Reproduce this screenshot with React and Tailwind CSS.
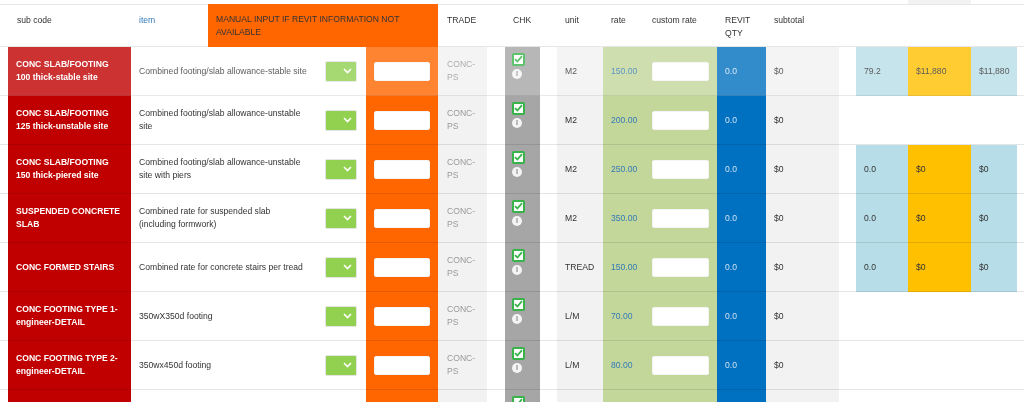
import React from "react";

const rows = [
  { a: "CONC SLAB/FOOTING", b: "100 thick-stable site", item: "Combined footing/slab allowance-stable site", unit: "M2", rate: "150.00", extra: ["79.2", "$11,880", "$11,880"], hover: true },
  { a: "CONC SLAB/FOOTING", b: "125 thick-unstable site", item: "Combined footing/slab allowance-unstable site", unit: "M2", rate: "200.00" },
  { a: "CONC SLAB/FOOTING", b: "150 thick-piered site", item: "Combined footing/slab allowance-unstable site with piers", unit: "M2", rate: "250.00", extra: ["0.0", "$0", "$0"] },
  { a: "SUSPENDED CONCRETE", b: "SLAB", item: "Combined rate for suspended slab (including formwork)", unit: "M2", rate: "350.00", extra: ["0.0", "$0", "$0"] },
  { a: "CONC FORMED STAIRS", item: "Combined rate for concrete stairs per tread", unit: "TREAD", rate: "150.00", extra: ["0.0", "$0", "$0"] },
  { a: "CONC FOOTING TYPE 1-", b: "engineer-DETAIL", item: "350wX350d footing", unit: "L/M", rate: "70.00" },
  { a: "CONC FOOTING TYPE 2-", b: "engineer-DETAIL", item: "350wx450d footing", unit: "L/M", rate: "80.00" },
];

const cell = "h-[49px] shrink-0 border-b border-black/10 flex items-center";

function Check() {
  return (
    <div className="flex flex-col items-start gap-[2px] -mt-[11px]">
      <div className="w-[13px] h-[13px] rounded-[2px] border-2 border-[#37b34a] bg-white flex items-center justify-center">
        <svg width="9" height="8" viewBox="0 0 9 8">
          <path d="M1 4.2 L3.4 6.5 L8 1.2" fill="none" stroke="#37b34a" strokeWidth="1.8" />
        </svg>
      </div>
      <div className="w-[10px] h-[10px] rounded-full bg-[#f4f4f4] flex items-center justify-center mt-[1px]">
        <div className="w-[1.5px] h-[5px] bg-[#bbb]" />
      </div>
    </div>
  );
}

function Select() {
  return (
    <div className="w-[32px] h-[21px] rounded-[2px] bg-[#92d050] border border-[#e4e4e4] flex items-center justify-end pr-[4px]">
      <svg width="9" height="6" viewBox="0 0 9 6">
        <path d="M1 1 L4.5 4.5 L8 1" fill="none" stroke="#fff" strokeWidth="1.6" />
      </svg>
    </div>
  );
}

function Input() {
  return <div className="w-[57px] h-[19px] rounded-[2px] bg-white border border-[#f4f4f4]" />;
}

function Row({ r, blank }) {
  return (
    <div className={`flex ${r.hover ? "opacity-80" : ""}`}>
      <div className={`${cell} w-[8px] bg-white`} />
      <div className={`${cell} w-[123px] bg-[#c00000] px-2 text-white font-bold`}>
        <div>{r.a}{r.b && <><br />{r.b}</>}</div>
      </div>
      <div className={`${cell} w-[235px] bg-white pl-2 text-[#333] justify-between pr-[9px]`}>
        <div className="w-[170px]">{r.item}</div>
        {!blank && <Select />}
      </div>
      <div className={`${cell} w-[72px] bg-[#ff6600] px-2`}>{!blank && <Input />}</div>
      <div className={`${cell} w-[49px] bg-[#f2f2f2] px-[9px] text-[#999]`}>
        {!blank && <div>CONC-<br />PS</div>}
      </div>
      <div className={`${cell} w-[18px] bg-white`} />
      <div className={`${cell} w-[35px] bg-[#a6a6a6] px-[7px]`}><Check /></div>
      <div className={`${cell} w-[17px] bg-white`} />
      <div className={`${cell} w-[46px] bg-[#f2f2f2] px-2 text-[#333]`}>{r.unit}</div>
      <div className={`${cell} w-[41px] bg-[#c4d79b] px-2 text-[#337ab7]`}>{r.rate}</div>
      <div className={`${cell} w-[73px] bg-[#c4d79b] pl-2`}>{!blank && <Input />}</div>
      <div className={`${cell} w-[49px] bg-[#0070c0] px-2 text-[#cfe3f5]`}>{!blank && "0.0"}</div>
      <div className={`${cell} w-[73px] bg-[#f2f2f2] px-2 text-[#333]`}>{!blank && "$0"}</div>
      {r.extra ? (
        <>
          <div className={`${cell} w-[17px] bg-white`} />
          <div className={`${cell} w-[52px] bg-[#b7dee8] px-2 text-[#333]`}>{r.extra[0]}</div>
          <div className={`${cell} w-[63px] bg-[#ffc000] px-2 text-[#333]`}>{r.extra[1]}</div>
          <div className={`${cell} w-[46px] bg-[#b7dee8] px-2 text-[#333]`}>{r.extra[2]}</div>
          <div className={`${cell} flex-1 bg-white`} />
        </>
      ) : (
        <div className={`${cell} flex-1 bg-white`} />
      )}
    </div>
  );
}

function Head({ w, children, className = "" }) {
  return <div className={`${w} shrink-0 px-2 pt-[9px] ${className}`}>{children}</div>;
}

export default function App() {
  return (
    <div
      className="h-[402px] w-[1024px] overflow-hidden bg-white text-[8.6px] leading-[13px] text-[#333] blur-[0.5px]"
      style={{ fontFamily: '"Liberation Sans", Arial, sans-serif' }}
    >
      <div className="h-[4px] flex">
        <div className="w-[908px]" />
        <div className="w-[63px] bg-[#f2f2f2]" />
      </div>
      <div className="flex h-[43px] border-y border-[#e6e6e6]">
        <Head w="w-[131px]" className="pl-[17px]">sub code</Head>
        <Head w="w-[77px]" className="text-[#337ab7]">item</Head>
        <Head w="w-[230px]" className="bg-[#ff6600] -mt-px h-[43px]">MANUAL INPUT IF REVIT INFORMATION NOT AVAILABLE</Head>
        <Head w="w-[67px]" className="pl-[9px]">TRADE</Head>
        <Head w="w-[52px]">CHK</Head>
        <Head w="w-[46px]">unit</Head>
        <Head w="w-[41px]">rate</Head>
        <Head w="w-[73px]">custom rate</Head>
        <Head w="w-[49px]">REVIT QTY</Head>
        <Head w="w-[73px]">subtotal</Head>
      </div>
      {rows.map((r, i) => <Row key={i} r={r} />)}
      <Row r={{ a: "", item: "", unit: "", rate: "" }} blank />
    </div>
  );
}
